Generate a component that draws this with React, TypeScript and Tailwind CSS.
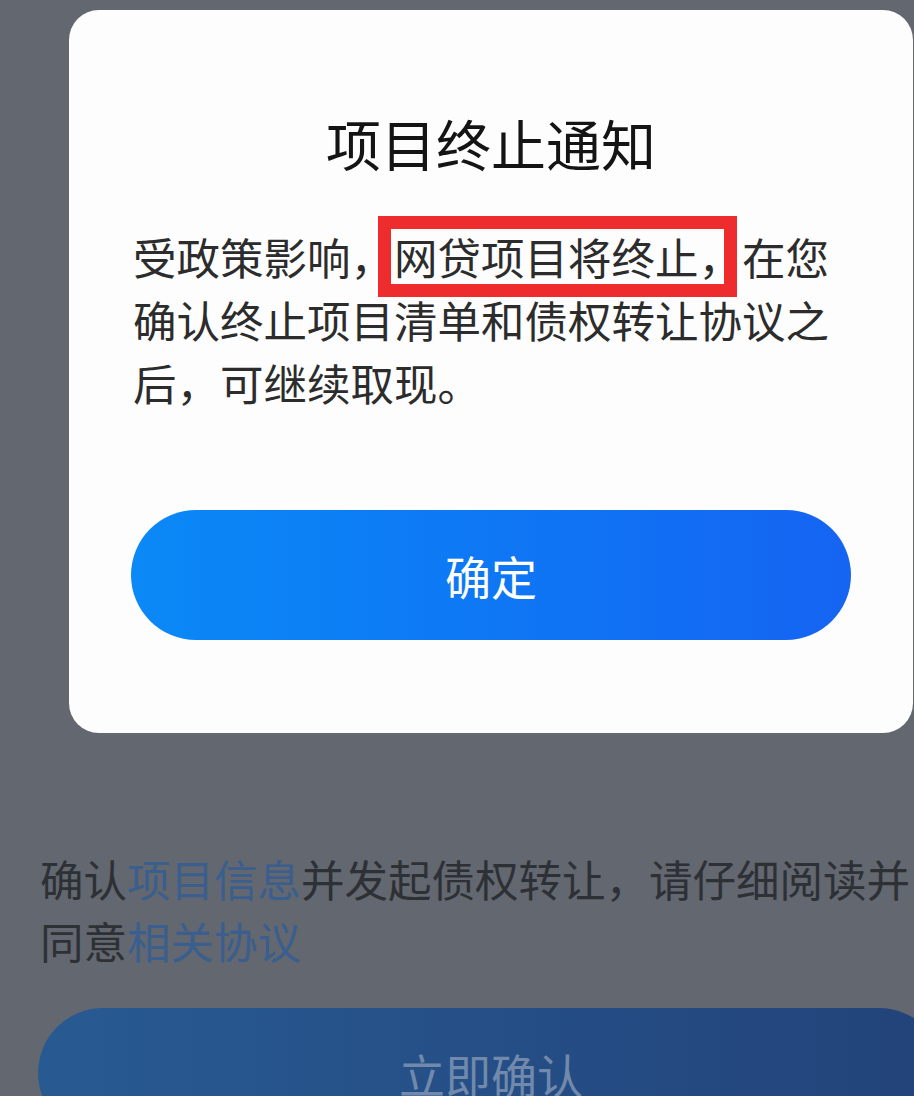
import React from "react";

const cjk = "font-['Noto_Sans_CJK_SC','Noto_Sans',sans-serif]";

function NoticeModal() {
  return (
    <div className="mx-[69px] mt-[10px] h-[723px] rounded-[30px] bg-[#fdfdfe] pt-[99px]">
      <h1 className="text-center text-[55px] leading-[66px] font-normal text-[#141414]">
        项目终止通知
      </h1>
      <p className="mt-[50px] px-[64px] text-[43.5px] leading-[63px] text-[#2c2c2c]">
        受政策影响，
        <span className="relative">
          {/* annotation box drawn over the text */}
          <span className="pointer-events-none absolute left-[-16px] top-[-9px] h-[81px] w-[359px] border-[13px] border-[#ee2b2d]" />
          网贷项目将终止，
        </span>
        在您确认终止项目清单和债权转让协议之后，可继续取现。
      </p>
      <div className="mt-[96px] px-[62px]">
        <button className="flex h-[130px] w-full items-center justify-center rounded-full bg-gradient-to-r from-[#0b89f6] to-[#1564f2] text-[46px] font-normal text-white">
          确定
        </button>
      </div>
    </div>
  );
}

export default function App() {
  return (
    <div className={`w-[914px] h-[1096px] overflow-hidden bg-[#63676f] ${cjk}`}>
      <div className="w-[982px]">
        <NoticeModal />

        {/* dimmed page content behind the modal */}
        <p className="mt-[115px] px-[40px] text-[43.5px] leading-[62px] text-[#2d3035]">
          确认<span className="text-[#3a5e8e]">项目信息</span>并发起债权转让，请仔细阅读并同意
          <span className="text-[#3a5e8e]">相关协议</span>
        </p>
        <div className="mt-[36px] px-[38px]">
          <button className="flex h-[130px] w-full items-center justify-center rounded-full bg-gradient-to-r from-[#285a92] to-[#22437a] text-[46px] text-[#7189ab]">
            立即确认
          </button>
        </div>
      </div>
    </div>
  );
}
